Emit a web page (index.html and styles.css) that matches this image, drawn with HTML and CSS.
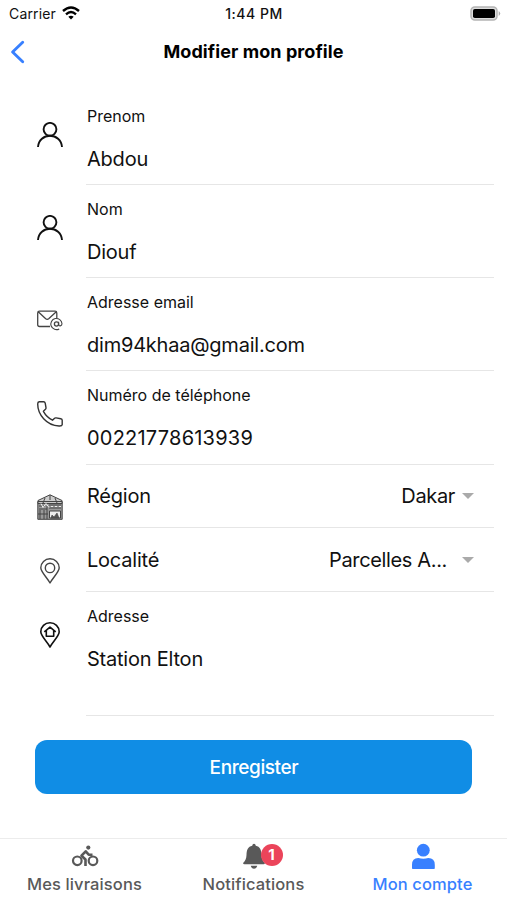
FILE: index.html
```html
<!DOCTYPE html>
<html lang="fr">
<head>
<meta charset="utf-8">
<title>Modifier mon profile</title>
<link rel="stylesheet" href="styles.css">
</head>
<body>
<div class="status">
  <div class="carrier"><span>Carrier</span>
    <svg width="18" height="14" viewBox="0 0 18 14" fill="none" stroke="#000" stroke-width="2.4"><path d="M1 5Q9-2 17 5M4 8.300q5-4.400 10 0"/><path d="M6.300 10.800q2.700-2.300 5.400 0L9 13.500z" fill="#000" stroke="none"/></svg>
  </div>
  <div class="clock">1:44 PM</div>
  <svg class="battery" width="31" height="15" viewBox="0 0 31 15"><rect x="1" y="1" width="26" height="13" rx="3.800" fill="#ddd" stroke="#b4b4b4" stroke-width="1.500"/><rect x="3" y="3" width="22" height="9" rx="1.800"/><path d="M28.700 5q3 2.500 0 5z" fill="#aaa"/></svg>
</div>
<header class="header">
  <svg class="back" width="16" height="24" viewBox="0 0 16 24" fill="none" stroke="#3880ff" stroke-width="2.900" stroke-linecap="round" stroke-linejoin="round"><path d="M12.700 2.300 2.600 12l10.100 9.700"/></svg>
  <h1>Modifier mon profile</h1>
</header>
<main class="form">
  <div class="row">
    <svg class="icon" viewBox="0 0 26 26" fill="none" stroke="#111" stroke-width="1.900"><circle cx="13" cy="7.300" r="6.400"/><path d="M1 25C1.500 18 7 13.700 13 13.700S24.500 18 25 25"/></svg>
    <div class="field"><label>Prenom</label><span class="value">Abdou</span></div>
  </div>
  <div class="row">
    <svg class="icon" viewBox="0 0 26 26" fill="none" stroke="#111" stroke-width="1.900"><circle cx="13" cy="7.300" r="6.400"/><path d="M1 25C1.500 18 7 13.700 13 13.700S24.500 18 25 25"/></svg>
    <div class="field"><label>Nom</label><span class="value">Diouf</span></div>
  </div>
  <div class="row mail">
    <svg class="icon" viewBox="0 0 26 26" fill="none" stroke="#444" stroke-width="1.300"><path d="M13 19.500H2.500Q.7 19.500.7 17.700V6Q.7 4.200 2.500 4.200H18Q19.800 4.200 19.800 6V11M1.500 5l7.200 6.800q1.500 1.200 3 0L19 5"/><circle cx="19.500" cy="17" r="2.100"/><path d="M21.600 14.800v2.500c0 2.500 3.400 1.800 3.400-.6a5.600 5.600 0 1 0-2.800 5.200" stroke-width="1.100"/></svg>
    <div class="field"><label>Adresse email</label><span class="value">dim94khaa@gmail.com</span></div>
  </div>
  <div class="row phone">
    <svg class="icon" viewBox="0 0 26 26" fill="none" stroke="#333" stroke-width="1.400" stroke-linejoin="round"><path d="M2.200.8H6.600Q7.900.8 8.200 2.100L9 6.600Q9.200 7.700 8.200 8.500L6.400 10.300Q9.500 16 15.500 19.200L17.300 17.400Q18 16.700 19.100 16.900L23.800 17.700Q25.200 18 25.200 19.300V23.700Q25 25.200 22 25C9.500 24.500.7 13.500.7 3Q.7 1 2.200.8z"/></svg>
    <div class="field"><label>Numéro de téléphone</label><span class="value digits">00221778613939</span></div>
  </div>
  <div class="row select first">
    <svg class="icon" viewBox="0 0 26 26" fill="none" stroke="#444" stroke-width="1"><path d="M.8 7.500V25.300H25.200V7.500" fill="#999"/><path d="M13 .8 1 6.500v3h24v-3z" fill="#ccc"/><path d="M13 1v5M8 4l-2 5M18 4l2 5M1 7.500h24M2 12h6M2 15h8M12 11h12M12 14h12M3 16v9M7 16v9M10 12v13M1 20h10"/><path d="M4 9.500l2 4 3-4 3 4" stroke="#eee"/><path d="M12.500 17h11v7h-11z" fill="#eee"/><path d="M14 24l1-3 2 2 3-4 2 5z" fill="#555" stroke-width=".6"/><path d="M14 12.500h2M18 12.500h2M22 12.500h2" stroke="#eee"/></svg>
    <div class="field"><span class="name">Région</span><span class="choice">Dakar</span><i class="caret"></i></div>
  </div>
  <div class="row select locality">
    <svg class="icon" viewBox="0 0 26 26" fill="none" stroke="#444" stroke-width="1.400" stroke-linejoin="round"><path d="M13 25C10 19.500 3.800 14 3.800 9.800a9.200 9 0 0 1 18.400 0C22.200 14 16 19.500 13 25z"/><circle cx="13" cy="9.900" r="4.700"/></svg>
    <div class="field"><span class="name">Localité</span><span class="choice">Parcelles A...</span><i class="caret"></i></div>
  </div>
  <div class="row area">
    <svg class="icon" viewBox="0 0 26 26" fill="none" stroke="#111" stroke-width="1.600" stroke-linejoin="round"><path d="M13 25C10 19.500 3.800 14 3.800 9.800a9.200 9 0 0 1 18.400 0C22.200 14 16 19.500 13 25z"/><path d="M7.300 9.900 13 5.100l5.700 4.800M9.300 8.700v5.500h7.400V8.700"/></svg>
    <div class="field"><label>Adresse</label><span class="value">Station Elton</span></div>
  </div>
  <button class="save" type="button">Enregister</button>
</main>
<nav class="tabs">
  <a class="tab">
    <svg width="28" height="28" viewBox="0 0 28 28" fill="none" stroke="#595959" stroke-width="2.200"><circle cx="6.300" cy="18.800" r="4.300"/><circle cx="22" cy="18.800" r="4.300"/><circle cx="17.300" cy="5.600" r="2.100" fill="#595959" stroke="none"/><path d="M14.500 24v-6.500l-4-3.800 4.200-4.400 3 3.400H21.500" stroke-width="2.600" stroke-linejoin="round"/></svg>
    <span>Mes livraisons</span>
  </a>
  <a class="tab">
    <div class="bell"><svg width="28" height="28" viewBox="0 0 28 28" fill="#595959"><path d="M14 1.800Q15.500 1.800 15.800 3.700C20 4.500 21.400 8 21.500 13c.1 4 1.300 5.800 3 7.500q1 1.800-.9 1.800H4.400q-1.900 0-.9-1.800c1.700-1.700 2.900-3.500 3-7.500.1-5 1.500-8.500 5.700-9.300Q12.500 1.800 14 1.800zM10.700 23.800h6.600q-.9 3-3.300 3t-3.300-3z"/></svg><b class="badge">1</b></div>
    <span>Notifications</span>
  </a>
  <a class="tab active">
    <svg width="28" height="28" viewBox="0 0 28 28" fill="#3880ff"><circle cx="14.300" cy="8.200" r="6.400"/><path d="M3.800 27q-.8 0-.8-.8v-3.500Q3 15.900 9.300 15.900q5 1.500 10 0 6.500 0 6.500 6.800v3.500q0 .8-.8.8z"/></svg>
    <span>Mon compte</span>
  </a>
</nav>
</body>
</html>
```

FILE: styles.css
```css
* { box-sizing: border-box; }
body {
  margin: 0;
  width: 507px;
  height: 900px;
  overflow: hidden;
  display: flex;
  flex-direction: column;
  background: #fff;
  color: #111;
  font-family: Inter, "Liberation Sans", sans-serif;
}
.status {
  height: 28px;
  flex: none;
  display: grid;
  grid-template-columns: 1fr auto 1fr;
  align-items: center;
  padding: 0 6px 0 9px;
  font-size: 14px;
}
.carrier { display: flex; align-items: center; gap: 6px; letter-spacing: .15px; line-height: 16px; }
.carrier svg { margin-top: -3px; }
.clock { font-weight: 500; font-size: 14px; letter-spacing: .5px; line-height: 16px; margin-left: -2px; }
.battery { justify-self: end; margin-top: -2px; }
.header {
  height: 64px;
  flex: none;
  display: grid;
  grid-template-columns: 1fr auto 1fr;
  align-items: start;
  padding: 12px 10px 0;
}
.header h1 {
  margin: 0;
  font-size: 18px;
  line-height: 24px;
  font-weight: 650;
  letter-spacing: .08px;
  color: #000;
}
.form { flex: 1; }
.row { display: flex; height: 93px; padding-left: 37px; padding-right: 13px; }
.icon { width: 26px; height: 26px; flex: none; margin: 30px 23px 0 0; }
.mail .icon { margin-top: 29px; }
.field {
  flex: 1;
  display: flex;
  flex-direction: column;
  padding: 14px 0 0 1px;
  border-bottom: 1px solid #e6e6e6;
}
.field label { font-size: 16px; line-height: 20px; }
.value { margin-top: 20px; font-size: 20px; line-height: 26px; white-space: nowrap; letter-spacing: -.22px; }
.digits { letter-spacing: .22px; }
.row.phone { height: 94px; }
.row.select { height: 63px; }
.select .icon { margin-top: 29px; }
.select .field { flex-direction: row; align-items: center; padding: 0 20px 0 1px; font-size: 20px; letter-spacing: -.22px; }
.select .choice { margin-left: auto; letter-spacing: -.35px; }
.caret { border: 6px solid transparent; border-top: 6px solid #aaa; border-bottom: 0; margin-left: 7px; }
.locality .caret { margin-left: 15px; }
.row.locality { height: 64px; }
.locality .icon { margin-top: 30px; }
.row.area { height: 124px; }
.save {
  display: block;
  width: 437px;
  height: 54px;
  margin: 24px 0 0 35.400px;
  padding: 0;
  border: 0;
  border-radius: 12px;
  background: #108de5;
  color: #fff;
  font: 450 19px Inter, sans-serif;
  letter-spacing: -.4px;
}
.tabs {
  height: 62px;
  flex: none;
  display: grid;
  grid-template-columns: repeat(3, 1fr);
  border-top: 1px solid #ececec;
  color: #595959;
}
.tab {
  display: flex;
  flex-direction: column;
  align-items: center;
  padding-top: 3px;
  font-size: 16.500px;
  font-weight: 450;
  letter-spacing: .12px;
  line-height: 20px;
}
.tab svg { display: block; }
.tab > span { margin-top: 4px; }
.bell { position: relative; }
.badge {
  position: absolute;
  left: 21px;
  top: 2px;
  width: 22px;
  height: 22px;
  border-radius: 50%;
  background: #eb445a;
  color: #fff;
  font-size: 15px;
  line-height: 22px;
  text-align: center;
}
.active { color: #3880ff; }
```
